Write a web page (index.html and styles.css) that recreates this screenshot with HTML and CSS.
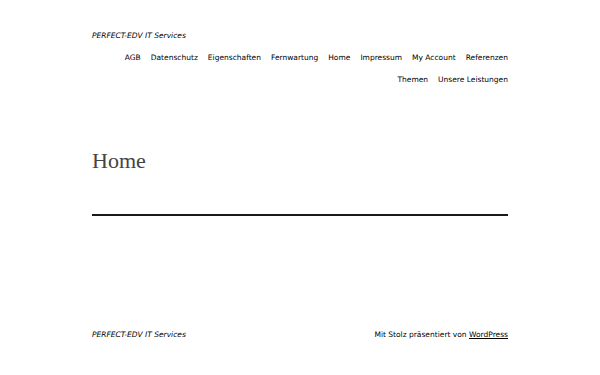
FILE: index.html
```html
<!DOCTYPE html>
<html lang="de">
<head>
    <meta charset="UTF-8">
    <meta name="viewport" content="width=device-width, initial-scale=1.0">
    <title>Home – PERFECT-EDV IT Services</title>
    <link rel="stylesheet" href="styles.css">
</head>
<body>

    <!-- Kopfbereich -->
    <header class="site-header">
        <p class="site-title"><a href="#">PERFECT-EDV IT Services</a></p>
        <nav class="main-nav">
            <a href="#">AGB</a>
            <a href="#">Datenschutz</a>
            <a href="#">Eigenschaften</a>
            <a href="#">Fernwartung</a>
            <a href="#">Home</a>
            <a href="#">Impressum</a>
            <a href="#">My Account</a>
            <a href="#">Referenzen</a>
            <a href="#">Themen</a>
            <a href="#">Unsere Leistungen</a>
        </nav>
    </header>

    <!-- Inhalt -->
    <main class="site-main">
        <h1 class="page-title">Home</h1>
        <hr class="separator">
    </main>

    <!-- Fußbereich -->
    <footer class="site-footer">
        <p class="site-title"><a href="#">PERFECT-EDV IT Services</a></p>
        <p class="credit">Mit Stolz präsentiert von <a href="#">WordPress</a></p>
    </footer>

</body>
</html>
```

FILE: styles.css
```css
:root {
    --text-color: #000;
    --line-color: #1a1a1a;
    --page-width: 416px;
}

body {
    font-family: "DejaVu Sans", sans-serif;
    font-size: 7.5px;
    color: var(--text-color);
    background: #fff;
    margin: 0;
    min-height: 375px;
    display: flex;
    flex-direction: column;
}

a {
    color: inherit;
    text-decoration: none;
}

/* Kopfbereich */
.site-header {
    width: var(--page-width);
    margin: 0 auto;
    padding-top: 31px;
}

.site-title {
    margin: 0;
    font-style: italic;
    line-height: 10px;
}

.main-nav {
    display: flex;
    flex-wrap: wrap;
    justify-content: flex-end;
    column-gap: 10px;
    row-gap: 12px;
    margin-top: 12px;
    line-height: 10px;
    padding-left: 20px;
}

/* Inhalt */
.site-main {
    width: var(--page-width);
    margin: 0 auto;
    padding-top: 61px;
    flex: 1;
}

.page-title {
    margin: 0;
    font-family: "Liberation Serif", serif;
    font-weight: normal;
    font-size: 22px;
    line-height: 30px;
    color: #444;
}

.separator {
    margin: 38px 0 0;
    border: none;
    border-top: 2px solid var(--line-color);
}

/* Fußbereich */
.site-footer {
    width: var(--page-width);
    margin: 0 auto;
    padding-bottom: 35px;
    display: flex;
    justify-content: space-between;
    line-height: 10px;
}

.site-footer p {
    margin: 0;
}

.credit a {
    text-decoration: underline;
}
```
